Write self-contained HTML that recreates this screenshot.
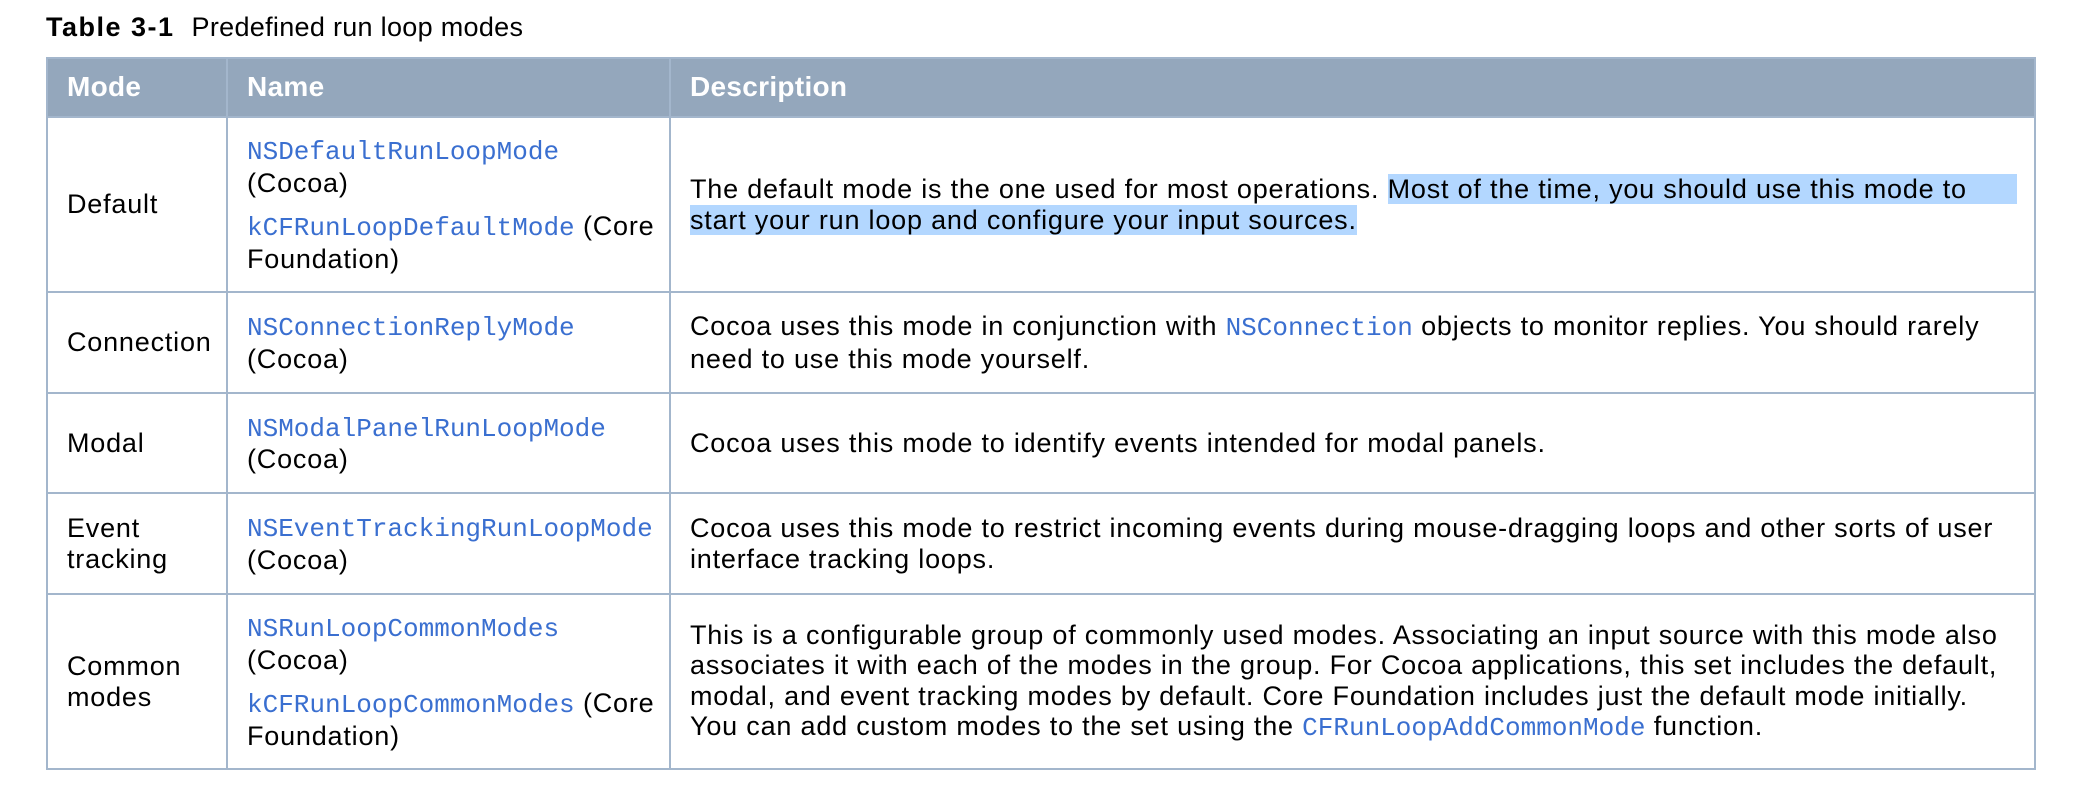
<!DOCTYPE html>
<html><head><meta charset="utf-8"><style>
html,body{margin:0;padding:0;background:#fff;width:2076px;height:786px;overflow:hidden}
body{font-family:"Liberation Sans",sans-serif;color:#000}
.title{position:absolute;left:46px;top:12px;font-size:27px;white-space:nowrap;letter-spacing:0.3px}
.title b{margin-right:17px;letter-spacing:1.5px}
table{position:absolute;left:46px;top:57px;border-collapse:collapse;width:1990px;table-layout:fixed}
td,th{border:2px solid #a3b6cc;vertical-align:middle;padding:0 10px 0 19px;font-size:27px;line-height:30.5px;text-align:left;letter-spacing:0.8px}
th{background:#94a7bc;color:#fff;font-weight:bold;height:57px;font-size:28px;letter-spacing:0.3px}
code{font-family:"Liberation Mono",monospace;color:#3a6fd0;font-size:26px;letter-spacing:0}
.nw{white-space:nowrap}
p{margin:0}
p+p{margin-top:13px}
.hl{background:#b3d7ff}
</style></head><body>
<div class="title"><b>Table 3-1</b>Predefined run loop modes</div>
<table>
<colgroup><col style="width:180px"><col style="width:443px"><col></colgroup>
<tr><th>Mode</th><th>Name</th><th>Description</th></tr>
<tr style="height:175px"><td>Default</td><td class="nw"><p><code>NSDefaultRunLoopMode</code><br>(Cocoa)</p><p><code>kCFRunLoopDefaultMode</code> (Core<br>Foundation)</p></td><td class="nw">The default mode is the one used for most operations. <span class="hl">Most of the time, you should use this mode to&nbsp;&nbsp;&nbsp;&nbsp;&nbsp;&nbsp;</span><br><span class="hl">start your run loop and configure your input sources.</span></td></tr>
<tr style="height:101px"><td>Connection</td><td class="nw"><code>NSConnectionReplyMode</code><br>(Cocoa)</td><td class="nw">Cocoa uses this mode in conjunction with <code>NSConnection</code> objects to monitor replies. You should rarely<br>need to use this mode yourself.</td></tr>
<tr style="height:100px"><td>Modal</td><td class="nw"><code>NSModalPanelRunLoopMode</code><br>(Cocoa)</td><td class="nw">Cocoa uses this mode to identify events intended for modal panels.</td></tr>
<tr style="height:101px"><td>Event<br>tracking</td><td class="nw"><code>NSEventTrackingRunLoopMode</code><br>(Cocoa)</td><td class="nw">Cocoa uses this mode to restrict incoming events during mouse-dragging loops and other sorts of user<br>interface tracking loops.</td></tr>
<tr style="height:175px"><td>Common<br>modes</td><td class="nw"><p><code>NSRunLoopCommonModes</code><br>(Cocoa)</p><p><code>kCFRunLoopCommonModes</code> (Core<br>Foundation)</p></td><td class="nw">This is a configurable group of commonly used modes. Associating an input source with this mode also<br>associates it with each of the modes in the group. For Cocoa applications, this set includes the default,<br>modal, and event tracking modes by default. Core Foundation includes just the default mode initially.<br>You can add custom modes to the set using the <code>CFRunLoopAddCommonMode</code> function.</td></tr>
</table>
</body></html>
